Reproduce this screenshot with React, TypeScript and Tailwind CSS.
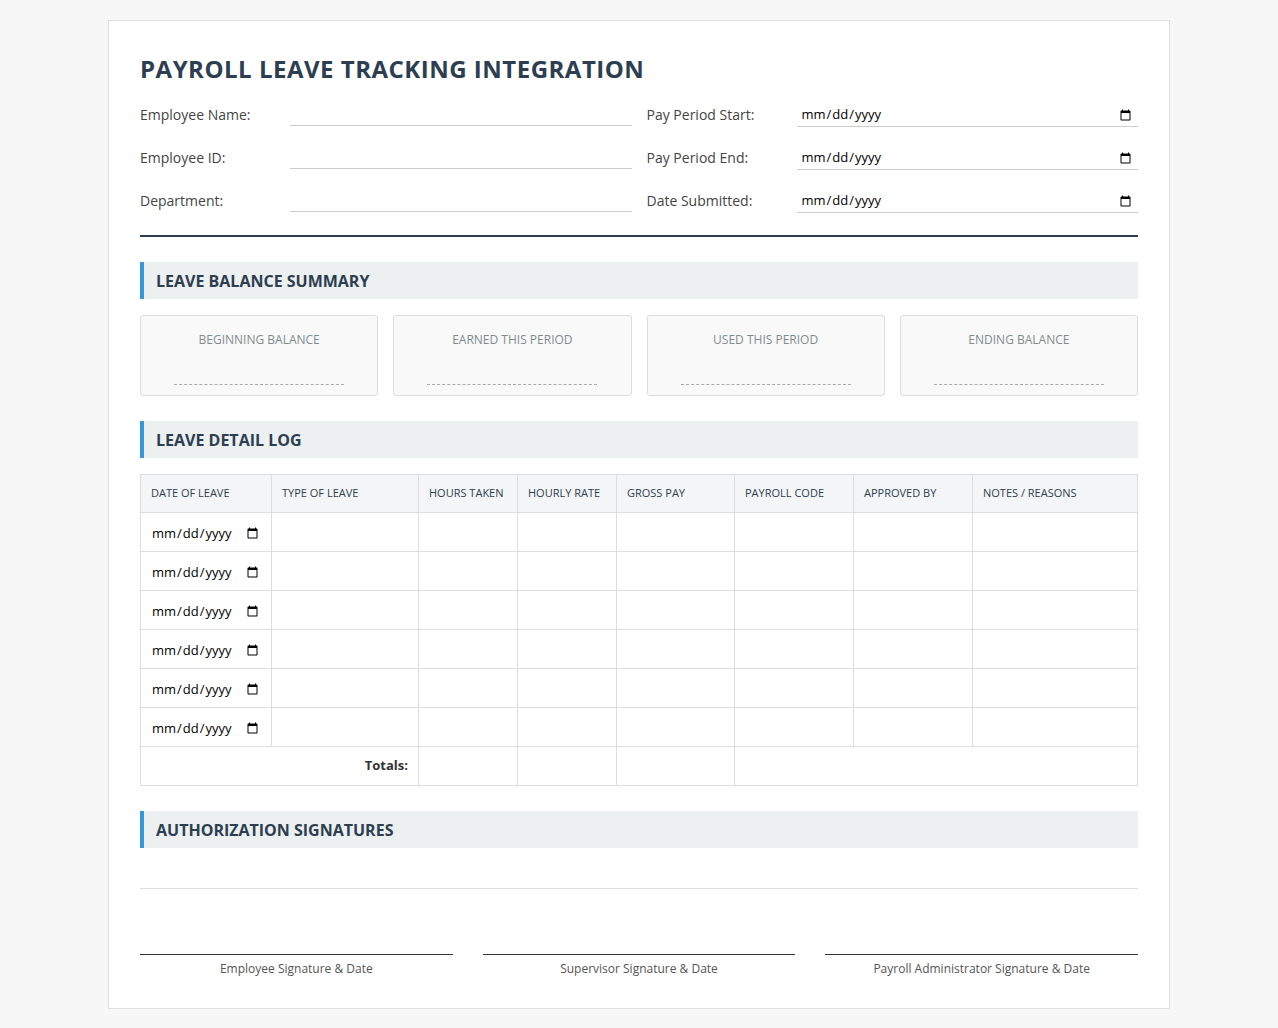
import React from 'react';

const LEFT_FIELDS = ['Employee Name:', 'Employee ID:', 'Department:'];
const RIGHT_FIELDS = ['Pay Period Start:', 'Pay Period End:', 'Date Submitted:'];
const BALANCES = ['Beginning Balance', 'Earned This Period', 'Used This Period', 'Ending Balance'];
const COLUMNS = [
  { label: 'Date of Leave', w: 'w-[131px]' },
  { label: 'Type of Leave', w: 'w-[147px]' },
  { label: 'Hours Taken', w: 'w-[99px]' },
  { label: 'Hourly Rate', w: 'w-[99px]' },
  { label: 'Gross Pay', w: 'w-[118px]' },
  { label: 'Payroll Code', w: 'w-[119px]' },
  { label: 'Approved By', w: 'w-[119px]' },
  { label: 'Notes / Reasons', w: '' },
];
const SIGNATURES = ['Employee Signature & Date', 'Supervisor Signature & Date', 'Payroll Administrator Signature & Date'];

const SectionHeader: React.FC<{ title: string; className?: string }> = ({ title, className = '' }) => (
  <div className={`bg-[#ecf0f1] border-l-4 border-[#3498db] h-[37px] flex items-center pl-3 ${className}`}>
    <h2 className="text-[16px] font-bold text-[#2c3e50] uppercase">{title}</h2>
  </div>
);

const DateInput: React.FC<{ className?: string }> = ({ className = '' }) => (
  <input type="date" className={`bg-transparent text-[13px] text-black outline-none ${className}`} />
);

const App: React.FC = () => {
  return (
    <div className="min-h-screen bg-[#f7f7f7] pt-5 pb-5" style={{ fontFamily: '"Open Sans", sans-serif' }}>
      <div className="mx-auto w-[1062px] bg-white border border-[#e0e0e0] px-[31px] pt-[30px] pb-[30px] text-[#333]">
        <h1 className="text-[24px] font-bold text-[#2c3e50] tracking-[0.5px] leading-[36px] mb-[6px]">
          PAYROLL LEAVE TRACKING INTEGRATION
        </h1>

        <div className="grid grid-cols-2 gap-x-[15px]">
          <div>
            {LEFT_FIELDS.map((f) => (
              <div key={f} className="flex items-center h-[43px]">
                <label className="w-[150px] text-[14px] font-medium text-[#444]">{f}</label>
                <div className="flex-1 self-start border-b border-[#ccc] h-[33px]" />
              </div>
            ))}
          </div>
          <div>
            {RIGHT_FIELDS.map((f) => (
              <div key={f} className="flex items-center h-[43px]">
                <label className="w-[150px] text-[14px] font-medium text-[#444]">{f}</label>
                <div className="flex-1 self-start border-b border-[#ccc] h-[34px] flex items-center pt-[11px] px-1">
                  <DateInput className="w-full" />
                </div>
              </div>
            ))}
          </div>
        </div>

        <div className="border-t-2 border-[#2c3e50] mt-[13px] mb-[25px]" />

        <SectionHeader title="Leave Balance Summary" />
        <div className="grid grid-cols-4 gap-[15px] mt-[16px]">
          {BALANCES.map((b) => (
            <div key={b} className="h-[81px] bg-[#f9f9f9] border border-[#ddd] rounded-[3px] flex flex-col items-center pt-[15px]">
              <div className="text-[12px] uppercase text-[#7f8c8d] font-medium">{b}</div>
              <div className="mt-auto mb-[10px] w-[170px] border-b border-dashed border-[#aaa]" />
            </div>
          ))}
        </div>

        <SectionHeader title="Leave Detail Log" className="mt-[25px]" />
        <table className="w-full mt-[16px] border-collapse table-fixed">
          <thead>
            <tr className="bg-[#f4f5f7] h-[38px]">
              {COLUMNS.map((c) => (
                <th key={c.label} className={`${c.w} border border-[#ddd] text-left px-[10px] text-[11px] font-medium uppercase text-[#2c3e50]`}>
                  {c.label}
                </th>
              ))}
            </tr>
          </thead>
          <tbody>
            {Array.from({ length: 6 }).map((_, r) => (
              <tr key={r} className="h-[39px]">
                {COLUMNS.map((c, i) => (
                  <td key={c.label} className="border border-[#ddd] px-[10px]">
                    {i === 0 && <DateInput className="w-full text-[12px]" />}
                  </td>
                ))}
              </tr>
            ))}
            <tr className="h-[39px]">
              <td colSpan={2} className="border border-[#ddd] px-[10px] text-right text-[13px] font-bold text-[#333]">Totals:</td>
              <td className="border border-[#ddd]" />
              <td className="border border-[#ddd]" />
              <td className="border border-[#ddd]" />
              <td colSpan={3} className="border border-[#ddd]" />
            </tr>
          </tbody>
        </table>

        <SectionHeader title="Authorization Signatures" className="mt-[25px]" />
        <div className="border-b border-[#ddd] mt-[40px]" />
        <div className="grid grid-cols-3 gap-[30px] mt-[65px]">
          {SIGNATURES.map((s) => (
            <div key={s} className="border-t border-[#333] pt-[5px] text-center text-[12px] text-[#555]">{s}</div>
          ))}
        </div>
      </div>
    </div>
  );
};

export default App;
